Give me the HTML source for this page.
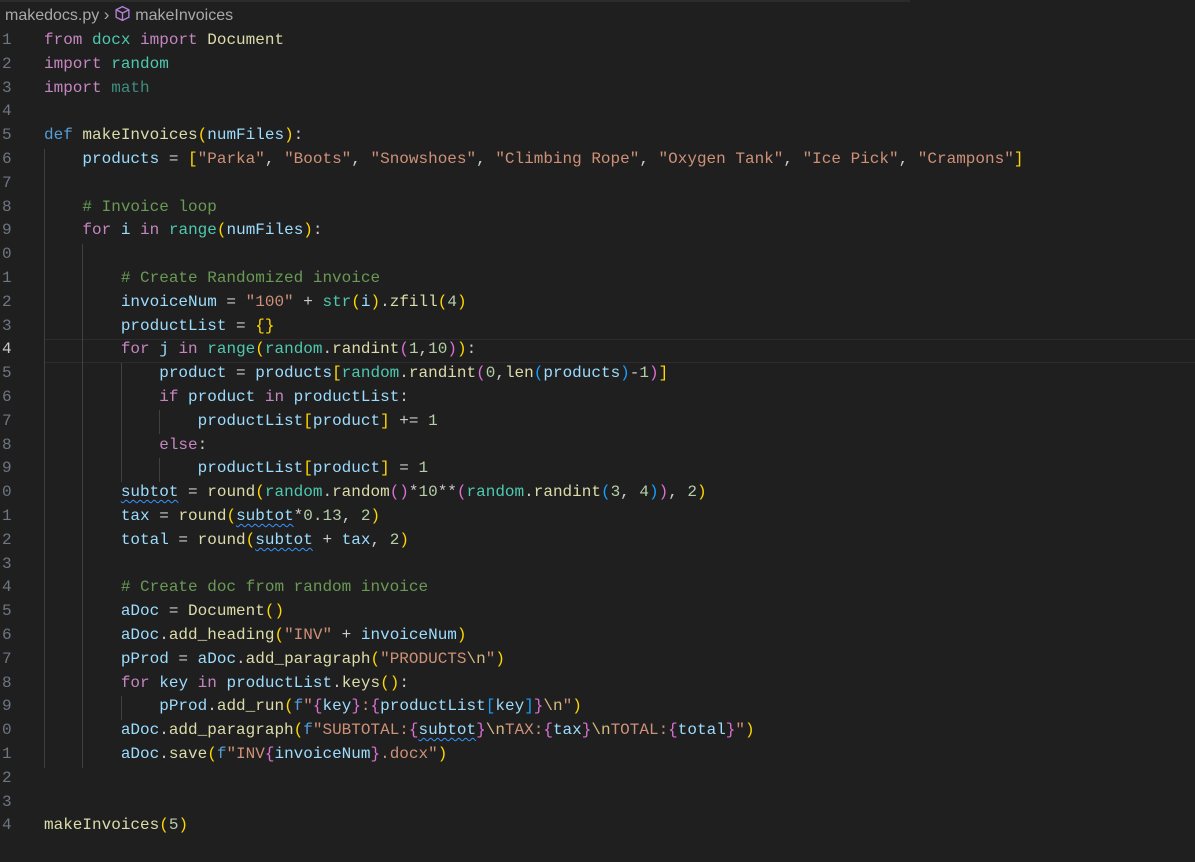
<!DOCTYPE html>
<html><head><meta charset="utf-8"><style>
html,body{margin:0;padding:0;background:#1f1f1f;width:1195px;height:862px;overflow:hidden}
.bc{position:absolute;top:5px;left:5px;font-family:"Liberation Sans",sans-serif;font-size:16px;color:#a9a9a9;white-space:pre}
.ln{position:absolute;left:2px;top:2px;font-family:"Liberation Mono",monospace;font-size:16px;color:#6e7681}
.code{position:absolute;left:44px;top:2px;font-family:"Liberation Mono",monospace;font-size:16px;color:#cccccc;white-space:pre}
.l{position:absolute;height:23.8px;line-height:23.8px}
.g{position:absolute;width:1px;background:#404040}
.k{color:#c586c0}.d{color:#569cd6}.f{color:#dcdcaa}.v{color:#9cdcfe}.s{color:#ce9178}.c{color:#6a9955}.t{color:#4ec9b0}.n{color:#b5cea8}.e{color:#d7ba7d}
.b1{color:#ffd700}.b2{color:#da70d6}.b3{color:#179fff}
.sq{text-decoration:underline wavy #3794ff;text-underline-offset:3px;text-decoration-thickness:1px}
</style></head><body>
<div style="position:absolute;left:0;top:0;width:910px;height:2px;background:#2b2b2b"></div>
<div class="bc">makedocs.py <span style="font-size:17px">&#x203A;</span> <svg width="17" height="17" viewBox="0 0 16 16" style="vertical-align:-2px"><path d="M8 1.5 L14 4.5 L14 11.5 L8 14.5 L2 11.5 L2 4.5 Z M2 4.5 L8 7.5 L14 4.5 M8 7.5 L8 14.5" fill="none" stroke="#b180d7" stroke-width="1.3" stroke-linejoin="round"/></svg> makeInvoices</div>
<div style="position:absolute;left:44px;right:0;top:339px;height:22px;border-top:1px solid #2c2c2c;border-bottom:1px solid #2c2c2c"></div>
<div class="g" style="left:44px;top:149px;height:619px"></div>
<div class="g" style="left:82px;top:244px;height:524px"></div>
<div class="g" style="left:121px;top:363px;height:119px"></div>
<div class="g" style="left:159px;top:410px;height:24px"></div>
<div class="g" style="left:159px;top:458px;height:24px"></div>
<div class="g" style="left:121px;top:696px;height:24px"></div>
<div class="code">
<div class="l" style="top:27px"><span class="k">from</span> <span class="t">docx</span> <span class="k">import</span> <span class="f">Document</span></div>
<div class="l" style="top:50.8px"><span class="k">import</span> <span class="t">random</span></div>
<div class="l" style="top:74.6px"><span class="k">import</span> <span class="t" style="opacity:.65">math</span></div>
<div class="l" style="top:122.2px"><span class="d">def</span> <span class="f">makeInvoices</span><span class="b1">(</span><span class="v">numFiles</span><span class="b1">)</span>:</div>
<div class="l" style="top:146px">    <span class="v">products</span> = <span class="b1">[</span><span class="s">"Parka"</span>, <span class="s">"Boots"</span>, <span class="s">"Snowshoes"</span>, <span class="s">"Climbing Rope"</span>, <span class="s">"Oxygen Tank"</span>, <span class="s">"Ice Pick"</span>, <span class="s">"Crampons"</span><span class="b1">]</span></div>
<div class="l" style="top:193.6px">    <span class="c"># Invoice loop</span></div>
<div class="l" style="top:217.4px">    <span class="k">for</span> <span class="v">i</span> <span class="k">in</span> <span class="t">range</span><span class="b1">(</span><span class="v">numFiles</span><span class="b1">)</span>:</div>
<div class="l" style="top:265px">        <span class="c"># Create Randomized invoice</span></div>
<div class="l" style="top:288.8px">        <span class="v">invoiceNum</span> = <span class="s">"100"</span> + <span class="t">str</span><span class="b1">(</span><span class="v">i</span><span class="b1">)</span>.<span class="f">zfill</span><span class="b1">(</span><span class="n">4</span><span class="b1">)</span></div>
<div class="l" style="top:312.6px">        <span class="v">productList</span> = <span class="b1">{}</span></div>
<div class="l" style="top:336.4px">        <span class="k">for</span> <span class="v">j</span> <span class="k">in</span> <span class="t">range</span><span class="b1">(</span><span class="t">random</span>.<span class="f">randint</span><span class="b2">(</span><span class="n">1</span>,<span class="n">10</span><span class="b2">)</span><span class="b1">)</span>:</div>
<div class="l" style="top:360.2px">            <span class="v">product</span> = <span class="v">products</span><span class="b1">[</span><span class="t">random</span>.<span class="f">randint</span><span class="b2">(</span><span class="n">0</span>,<span class="f">len</span><span class="b3">(</span><span class="v">products</span><span class="b3">)</span>-<span class="n">1</span><span class="b2">)</span><span class="b1">]</span></div>
<div class="l" style="top:384px">            <span class="k">if</span> <span class="v">product</span> <span class="k">in</span> <span class="v">productList</span>:</div>
<div class="l" style="top:407.8px">                <span class="v">productList</span><span class="b1">[</span><span class="v">product</span><span class="b1">]</span> += <span class="n">1</span></div>
<div class="l" style="top:431.6px">            <span class="k">else</span>:</div>
<div class="l" style="top:455.4px">                <span class="v">productList</span><span class="b1">[</span><span class="v">product</span><span class="b1">]</span> = <span class="n">1</span></div>
<div class="l" style="top:479.2px">        <span class="v sq">subtot</span> = <span class="f">round</span><span class="b1">(</span><span class="t">random</span>.<span class="f">random</span><span class="b2">()</span>*<span class="n">10</span>**<span class="b2">(</span><span class="t">random</span>.<span class="f">randint</span><span class="b3">(</span><span class="n">3</span>, <span class="n">4</span><span class="b3">)</span><span class="b2">)</span>, <span class="n">2</span><span class="b1">)</span></div>
<div class="l" style="top:503px">        <span class="v">tax</span> = <span class="f">round</span><span class="b1">(</span><span class="v sq">subtot</span>*<span class="n">0.13</span>, <span class="n">2</span><span class="b1">)</span></div>
<div class="l" style="top:526.8px">        <span class="v">total</span> = <span class="f">round</span><span class="b1">(</span><span class="v sq">subtot</span> + <span class="v">tax</span>, <span class="n">2</span><span class="b1">)</span></div>
<div class="l" style="top:574.4px">        <span class="c"># Create doc from random invoice</span></div>
<div class="l" style="top:598.2px">        <span class="v">aDoc</span> = <span class="f">Document</span><span class="b1">()</span></div>
<div class="l" style="top:622px">        <span class="v">aDoc</span>.<span class="f">add_heading</span><span class="b1">(</span><span class="s">"INV"</span> + <span class="v">invoiceNum</span><span class="b1">)</span></div>
<div class="l" style="top:645.8px">        <span class="v">pProd</span> = <span class="v">aDoc</span>.<span class="f">add_paragraph</span><span class="b1">(</span><span class="s">"PRODUCTS</span><span class="e">\n</span><span class="s">"</span><span class="b1">)</span></div>
<div class="l" style="top:669.6px">        <span class="k">for</span> <span class="v">key</span> <span class="k">in</span> <span class="v">productList</span>.<span class="f">keys</span><span class="b1">()</span>:</div>
<div class="l" style="top:693.4px">            <span class="v">pProd</span>.<span class="f">add_run</span><span class="b1">(</span><span class="d">f</span><span class="s">"</span><span class="b2">{</span><span class="v">key</span><span class="b2">}</span><span class="s">:</span><span class="b2">{</span><span class="v">productList</span><span class="b3">[</span><span class="v">key</span><span class="b3">]</span><span class="b2">}</span><span class="e">\n</span><span class="s">"</span><span class="b1">)</span></div>
<div class="l" style="top:717.2px">        <span class="v">aDoc</span>.<span class="f">add_paragraph</span><span class="b1">(</span><span class="d">f</span><span class="s">"SUBTOTAL:</span><span class="b2">{</span><span class="v sq">subtot</span><span class="b2">}</span><span class="e">\n</span><span class="s">TAX:</span><span class="b2">{</span><span class="v">tax</span><span class="b2">}</span><span class="e">\n</span><span class="s">TOTAL:</span><span class="b2">{</span><span class="v">total</span><span class="b2">}</span><span class="s">"</span><span class="b1">)</span></div>
<div class="l" style="top:741px">        <span class="v">aDoc</span>.<span class="f">save</span><span class="b1">(</span><span class="d">f</span><span class="s">"INV</span><span class="b2">{</span><span class="v">invoiceNum</span><span class="b2">}</span><span class="s">.docx"</span><span class="b1">)</span></div>
<div class="l" style="top:812.4px"><span class="f">makeInvoices</span><span class="b1">(</span><span class="n">5</span><span class="b1">)</span></div>
</div>
<div class="ln">
<div class="l" style="top:27px">1</div><div class="l" style="top:50.8px">2</div><div class="l" style="top:74.6px">3</div><div class="l" style="top:98.4px">4</div><div class="l" style="top:122.2px">5</div><div class="l" style="top:146px">6</div><div class="l" style="top:169.8px">7</div><div class="l" style="top:193.6px">8</div><div class="l" style="top:217.4px">9</div><div class="l" style="top:241.2px">0</div><div class="l" style="top:265px">1</div><div class="l" style="top:288.8px">2</div><div class="l" style="top:312.6px">3</div><div class="l" style="top:336.4px;color:#cccccc">4</div><div class="l" style="top:360.2px">5</div><div class="l" style="top:384px">6</div><div class="l" style="top:407.8px">7</div><div class="l" style="top:431.6px">8</div><div class="l" style="top:455.4px">9</div><div class="l" style="top:479.2px">0</div><div class="l" style="top:503px">1</div><div class="l" style="top:526.8px">2</div><div class="l" style="top:550.6px">3</div><div class="l" style="top:574.4px">4</div><div class="l" style="top:598.2px">5</div><div class="l" style="top:622px">6</div><div class="l" style="top:645.8px">7</div><div class="l" style="top:669.6px">8</div><div class="l" style="top:693.4px">9</div><div class="l" style="top:717.2px">0</div><div class="l" style="top:741px">1</div><div class="l" style="top:764.8px">2</div><div class="l" style="top:788.6px">3</div><div class="l" style="top:812.4px">4</div>
</div>
</body></html>
